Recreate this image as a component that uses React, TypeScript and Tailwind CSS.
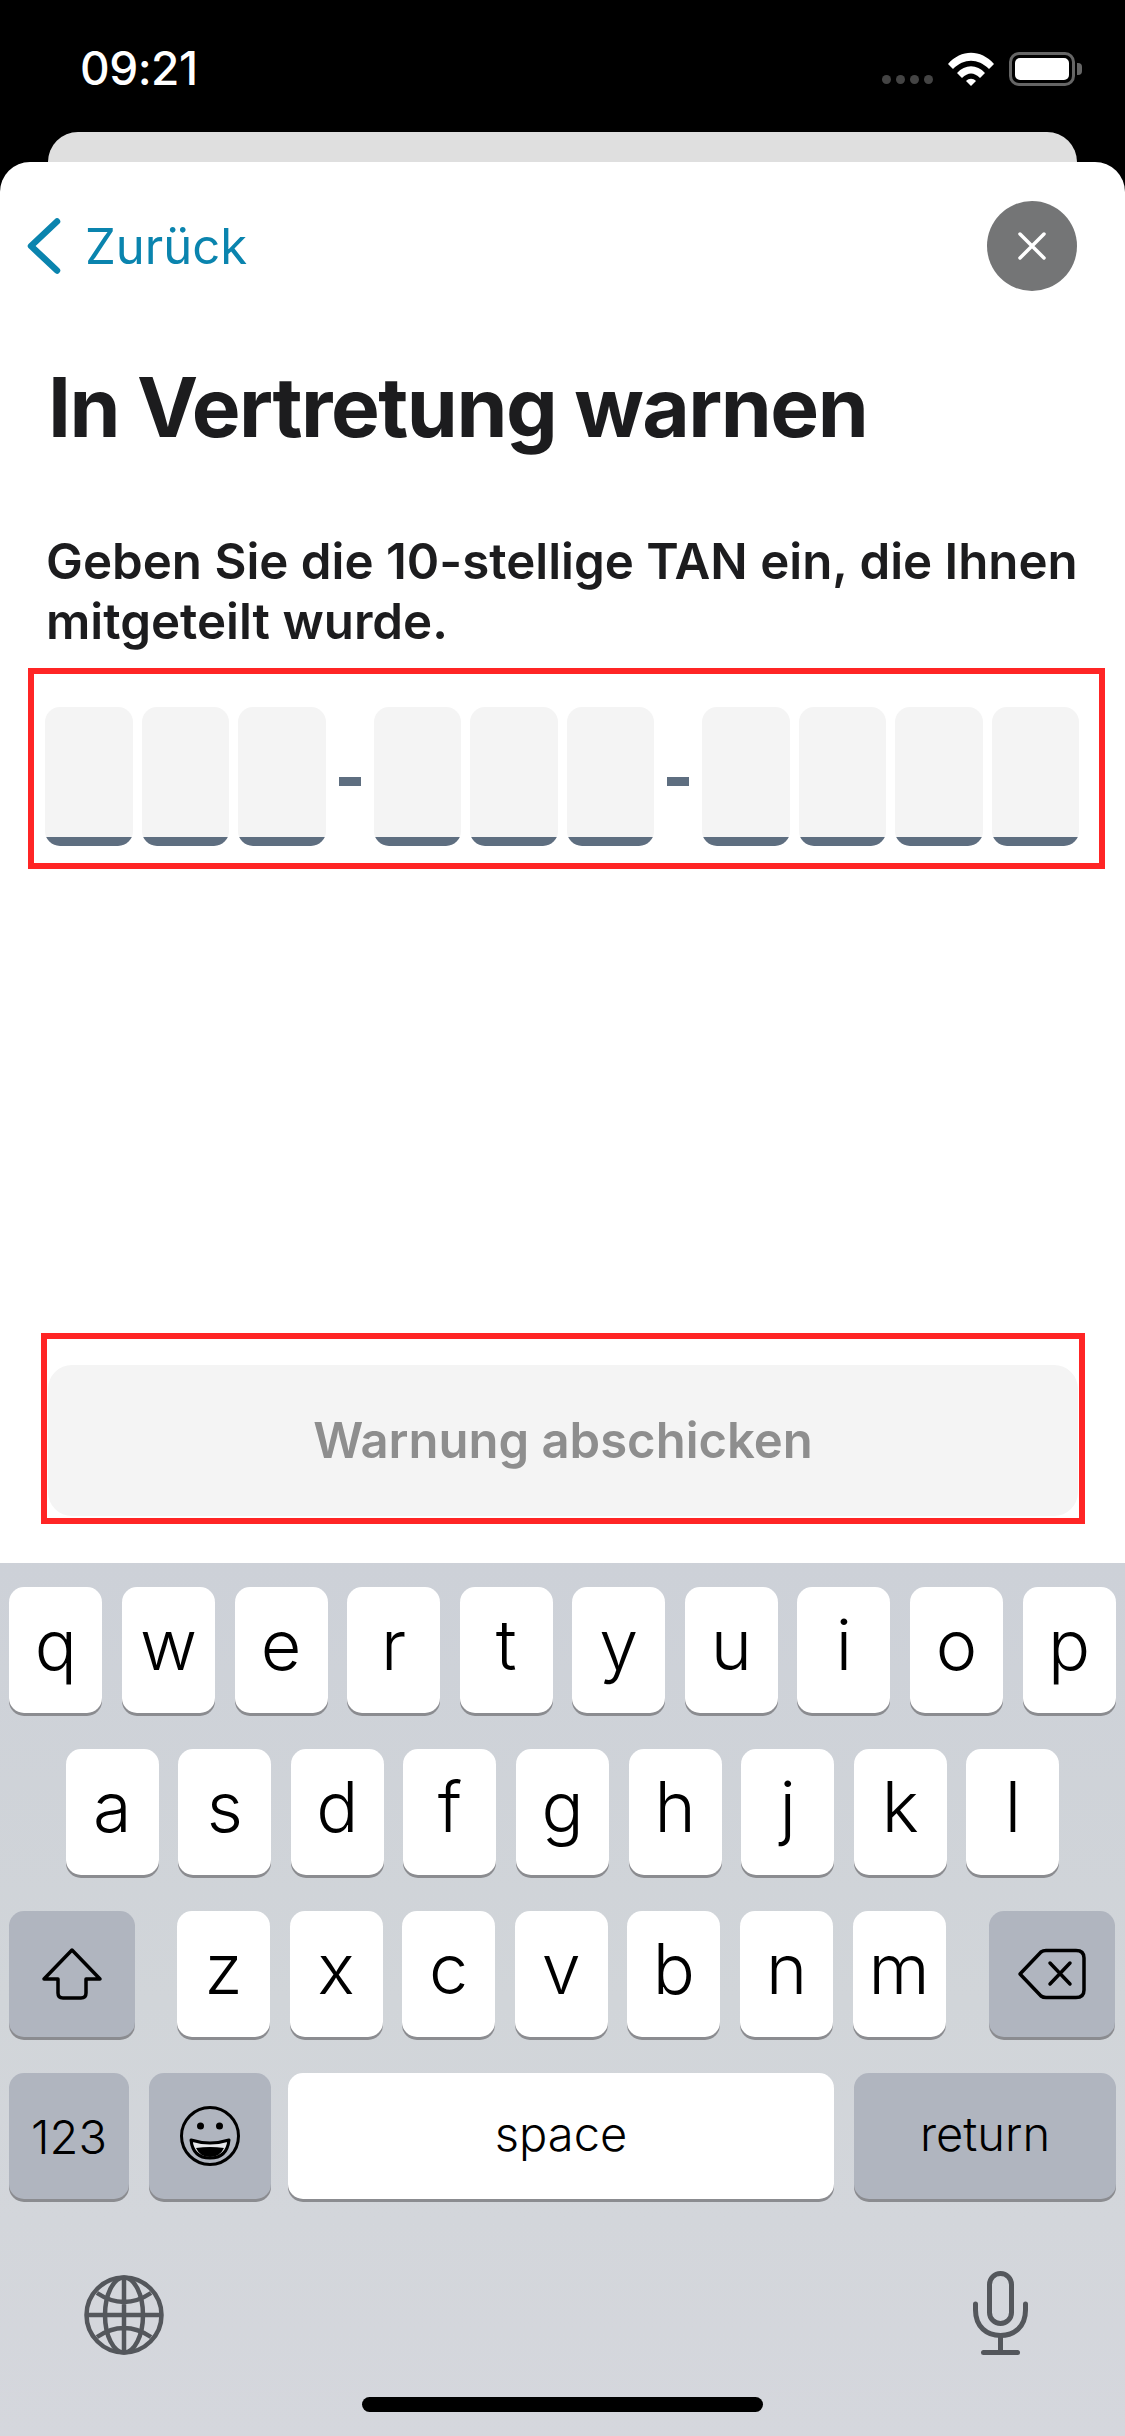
const rowOne = ['q', 'w', 'e', 'r', 't', 'y', 'u', 'i', 'o', 'p'];
const rowTwo = ['a', 's', 'd', 'f', 'g', 'h', 'j', 'k', 'l'];
const rowThree = ['z', 'x', 'c', 'v', 'b', 'n', 'm'];
const tanGroups = [3, 3, 4];

const Cell = () => (
  <div className="flex h-[139px] w-[87.5px] flex-col justify-end overflow-hidden rounded-[15px] bg-[#f4f4f4]">
    <div className="h-[9px] bg-[#5e6e80]" />
  </div>
);

const LetterKey = ({ label }: { label: string }) => (
  <div className="flex h-[126px] w-[93px] items-center justify-center rounded-[15px] bg-white pb-[10px] text-[70px] leading-none font-light text-black shadow-[0_3px_0_#8b8c90]">
    {label}
  </div>
);

const StatusBar = () => (
  <div className="flex h-[132px] shrink-0 items-start justify-between pt-[41px] pr-[43px] pl-[80px] text-white">
    <span className="text-[46px] leading-[54px] font-medium tracking-[-0.5px]">09:21</span>
    <div className="flex items-start pt-[11px]">
      <div className="mt-[23px] mr-[15px] flex gap-[5px]">
        <span className="h-[9px] w-[9px] rounded-full bg-[#444]" />
        <span className="h-[9px] w-[9px] rounded-full bg-[#444]" />
        <span className="h-[9px] w-[9px] rounded-full bg-[#444]" />
        <span className="h-[9px] w-[9px] rounded-full bg-[#444]" />
      </div>
      <svg width="46" height="34" viewBox="0 0 46 34" fill="white">
        <path d="M0 12 C13 -3 33 -3 46 12 L41 17 C30 6 16 6 5 17 Z" />
        <path d="M9 21 C17 12 29 12 37 21 L32 26 C26 20 20 20 14 26 Z" />
        <path d="M18 29 C21 26 25 26 28 29 L23 34 Z" />
      </svg>
      <div className="ml-[15px] flex h-[34px] w-[66px] rounded-[10px] border-[3px] border-[#666] p-[3px]">
        <div className="flex-1 rounded-[5px] bg-white" />
      </div>
      <div className="mt-[11px] ml-[2px] h-[12px] w-[5px] rounded-r-[4px] bg-[#666]" />
    </div>
  </div>
);

const Keyboard = () => (
  <div className="flex h-[873px] shrink-0 flex-col bg-linear-to-b from-[#cdd1d8] via-[#d1d5d9] to-[#d5d7dd] pt-[24px]">
    <div className="flex flex-col gap-[36px]">
      <div className="flex justify-center gap-[19.6px]">
        {rowOne.map((k) => (
          <LetterKey key={k} label={k} />
        ))}
      </div>
      <div className="flex justify-center gap-[19.6px]">
        {rowTwo.map((k) => (
          <LetterKey key={k} label={k} />
        ))}
      </div>
      <div className="flex pl-[9px]">
        <div className="mr-[42px] flex h-[126px] w-[126px] items-center justify-center rounded-[15px] bg-[#b0b5bf] shadow-[0_3px_0_#8b8c90]">
          <svg width="62" height="54" viewBox="0 0 62 54" fill="none" stroke="black" strokeWidth="3.5" strokeLinejoin="round">
            <path d="M31 3 L59 32 H45 V46 Q45 51 40 51 H22 Q17 51 17 46 V32 H3 Z" />
          </svg>
        </div>
        <div className="flex gap-[19.6px]">
          {rowThree.map((k) => (
            <LetterKey key={k} label={k} />
          ))}
        </div>
        <div className="ml-[43px] flex h-[126px] w-[126px] items-center justify-center rounded-[15px] bg-[#b0b5bf] shadow-[0_3px_0_#8b8c90]">
          <svg width="70" height="52" viewBox="0 0 70 52" fill="none" stroke="black" strokeWidth="3.5" strokeLinejoin="round" strokeLinecap="round">
            <path d="M3 26 L24 4 Q26 2.500 29 2.500 H59 Q67 2.500 67 10 V42 Q67 49.500 59 49.500 H29 Q26 49.500 24 48 Z" />
            <path d="M33 15 L53 36 M53 15 L33 36" />
          </svg>
        </div>
      </div>
      <div className="flex pl-[9px] text-[47px] leading-none font-light text-black">
        <div className="flex h-[126px] w-[120px] items-center justify-center rounded-[15px] bg-[#b0b5bf] shadow-[0_3px_0_#8b8c90]">
          123
        </div>
        <div className="ml-[19.500px] flex h-[126px] w-[122.500px] items-center justify-center rounded-[15px] bg-[#b0b5bf] shadow-[0_3px_0_#8b8c90]">
          <svg width="62" height="62" viewBox="0 0 62 62" fill="none" stroke="black" strokeWidth="3">
            <circle cx="31" cy="31" r="28.500" />
            <circle cx="21.500" cy="21" r="3.500" fill="black" stroke="none" />
            <circle cx="40.500" cy="21" r="3.500" fill="black" stroke="none" />
            <path d="M12 35 Q31 41 50 35 Q48 53 31 53 Q14 53 12 35 Z" fill="#e8e9ec" strokeLinejoin="round" />
            <path d="M17 43 Q31 41 45 43 Q41 52 31 52 Q21 52 17 43 Z" fill="black" stroke="none" />
          </svg>
        </div>
        <div className="ml-[17px] flex h-[126px] w-[546px] items-center justify-center rounded-[15px] bg-white pb-[5px] shadow-[0_3px_0_#8b8c90]">
          space
        </div>
        <div className="ml-[20px] flex h-[126px] w-[262px] items-center justify-center rounded-[15px] bg-[#b0b5bf] pb-[5px] shadow-[0_3px_0_#8b8c90]">
          return
        </div>
      </div>
    </div>
    <div className="mt-[72px] flex items-end justify-between pr-[97px] pl-[84px]">
      <svg width="80" height="80" viewBox="0 0 80 80" fill="none" stroke="#54575c" strokeWidth="4.500">
        <circle cx="40" cy="40" r="37.500" />
        <ellipse cx="40" cy="40" rx="19" ry="37.500" />
        <path d="M40 2.500 V77.500 M2.500 40 H77.500 M13 18 Q40 36 67 18 M13 62 Q40 44 67 62" />
      </svg>
      <svg width="55" height="84" viewBox="0 0 55 84" fill="none" stroke="#54575c" strokeWidth="5" strokeLinecap="round">
        <rect x="16.500" y="2.500" width="22" height="50" rx="11" />
        <path d="M2.500 33 V39 C2.500 56 14 64.500 27.500 64.500 C41 64.500 52.500 56 52.500 39 V33" />
        <path d="M27.500 65 V80" strokeLinecap="butt" />
        <path d="M10.500 81.500 H44.500" />
      </svg>
    </div>
    <div className="mx-auto mt-[42px] h-[15px] w-[401px] rounded-full bg-black" />
  </div>
);

export default function App() {
  return (
    <div className="flex h-[2436px] w-[1125px] flex-col overflow-hidden bg-black font-['Inter',sans-serif]">
      <StatusBar />
      <div className="mx-[48px] h-[30px] shrink-0 rounded-t-[30px] bg-[#dfdfdf]" />
      <div className="flex min-h-0 flex-1 flex-col rounded-t-[30px] bg-white pb-[39px]">
        <div className="flex items-center justify-between pt-[39px] pr-[48px] pl-[27px]">
          <div className="flex items-center text-[#0a84ae]">
            <svg width="34" height="56" viewBox="0 0 34 56" fill="none" stroke="currentColor" strokeWidth="6.500" strokeLinecap="round" strokeLinejoin="round">
              <path d="M30 3.500 L4 28 L30 52.500" />
            </svg>
            <span className="ml-[24px] text-[49px] leading-none font-normal">Zurück</span>
          </div>
          <div className="flex h-[90px] w-[90px] items-center justify-center rounded-full bg-[#747576]">
            <svg width="28" height="28" viewBox="0 0 28 28" fill="none" stroke="white" strokeWidth="3.500" strokeLinecap="round">
              <path d="M2 2 L26 26 M26 2 L2 26" />
            </svg>
          </div>
        </div>
        <h1 className="mt-[67px] ml-[48px] text-[82px] leading-[100px] font-bold tracking-[-1.5px] text-[#1c1c1e]">In Vertretung warnen</h1>
        <p className="mt-[73px] ml-[46px] w-[1070px] text-[49.250px] leading-[60px] font-semibold text-[#1c1c1e]">
          Geben Sie die 10-stellige TAN ein, die Ihnen
          <br />
          mitgeteilt wurde.
        </p>
        <div className="mt-[17px] ml-[28px] flex h-[201px] w-[1077px] items-start border-[6px] border-[#ff2525] pt-[33px] pl-[11px]">
          {tanGroups.map((count, g) => (
            <div key={g} className="flex items-center">
              {g > 0 && <div className="mx-[13px] mt-[10px] h-[9px] w-[22px] bg-[#5e6e80]" />}
              <div className="flex gap-[9px]">
                {Array.from({ length: count }, (_, i) => (
                  <Cell key={i} />
                ))}
              </div>
            </div>
          ))}
        </div>
        <div className="mt-auto ml-[41px] h-[191px] w-[1044px] border-[6px] border-[#ff2525] px-[1px] pt-[26px]">
          <div className="flex h-[151px] items-center justify-center rounded-[24px] bg-[#f4f4f4] text-[49px] font-semibold text-[#8e8e8e]">
            Warnung abschicken
          </div>
        </div>
      </div>
      <Keyboard />
    </div>
  );
}
